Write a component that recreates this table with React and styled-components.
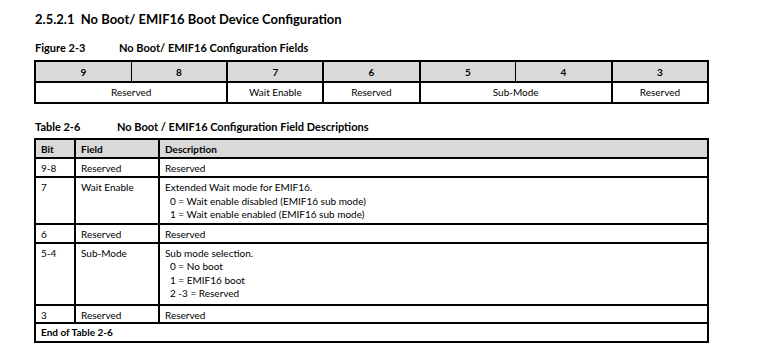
import React from 'react';
import styled, { createGlobalStyle } from 'styled-components';

const GlobalStyle = createGlobalStyle`
  body {
    margin: 0;
    background: #fff;
    font-family: Lato, "Liberation Sans", sans-serif;
    color: #000;
  }
`;

const Page = styled.div`
  width: 771px;
  height: 357px;
  padding: 11px 0 0 34px;
  box-sizing: border-box;
  display: flex;
  flex-direction: column;
`;

const SectionTitle = styled.h2`
  margin: 0 0 0 1px;
  font-size: 13px;
  font-weight: 700;
  line-height: 16px;
`;

const Caption = styled.div`
  display: flex;
  margin: ${(p) => p.$top}px 0 ${(p) => p.$bottom}px 1px;
  font-size: 11px;
  font-weight: 700;
  line-height: 14px;
`;

const CaptionLabel = styled.span`
  width: ${(p) => p.$width}px;
  flex-shrink: 0;
`;

const Table = styled.table`
  border-collapse: collapse;
  table-layout: fixed;
  width: 675px;
  font-size: 10px;
`;

const HeadCell = styled.th`
  background: #d9d9d9;
  border: 2px solid #000;
  ${(p) => p.$thinLeft && 'border-left-width: 1px;'}
  ${(p) => p.$thinRight && 'border-right-width: 1px;'}
  font-weight: 700;
  text-align: ${(p) => p.$align || 'center'};
  padding: 0 5px;
  height: ${(p) => p.$h}px;
  box-sizing: border-box;
`;

const Cell = styled.td`
  border: 2px solid #000;
  text-align: ${(p) => p.$align || 'center'};
  vertical-align: ${(p) => p.$valign || 'middle'};
  padding: ${(p) => p.$pad || '0 5px'};
  height: ${(p) => p.$h}px;
  box-sizing: border-box;
  line-height: 13.5px;
  font-weight: ${(p) => (p.$bold ? 700 : 400)};
`;

const Line = styled.div`
  padding-left: ${(p) => (p.$indent ? 5 : 0)}px;
`;

const bits = ['9', '8', '7', '6', '5', '4', '3'];

const fields = [
  { bit: '9-8', field: 'Reserved', desc: ['Reserved'], h: 19 },
  {
    bit: '7',
    field: 'Wait Enable',
    desc: [
      'Extended Wait mode for EMIF16.',
      '0 = Wait enable disabled (EMIF16 sub mode)',
      '1 = Wait enable enabled (EMIF16 sub mode)',
    ],
    h: 47,
  },
  { bit: '6', field: 'Reserved', desc: ['Reserved'], h: 18 },
  {
    bit: '5-4',
    field: 'Sub-Mode',
    desc: ['Sub mode selection.', '0 = No boot', '1 = EMIF16 boot', '2 -3 = Reserved'],
    h: 62,
  },
  { bit: '3', field: 'Reserved', desc: ['Reserved'], h: 18 },
];

const App = () => {
  return (
    <>
      <GlobalStyle />
      <Page>
        <SectionTitle>2.5.2.1&nbsp; No Boot/ EMIF16 Boot Device Configuration</SectionTitle>

        <Caption $top={14} $bottom={5}>
          <CaptionLabel $width={84}>Figure 2-3</CaptionLabel>
          <span>No Boot/ EMIF16 Configuration Fields</span>
        </Caption>
        <Table>
          <thead>
            <tr>
              {bits.map((b) => (
                <HeadCell
                  key={b}
                  $h={21}
                  $thinRight={b === '9' || b === '5'}
                  $thinLeft={b === '8' || b === '4'}
                >
                  {b}
                </HeadCell>
              ))}
            </tr>
          </thead>
          <tbody>
            <tr>
              <Cell colSpan={2} $h={21}>Reserved</Cell>
              <Cell $h={21}>Wait Enable</Cell>
              <Cell $h={21}>Reserved</Cell>
              <Cell colSpan={2} $h={21}>Sub-Mode</Cell>
              <Cell $h={21}>Reserved</Cell>
            </tr>
          </tbody>
        </Table>

        <Caption $top={16} $bottom={4}>
          <CaptionLabel $width={82}>Table 2-6</CaptionLabel>
          <span>No Boot / EMIF16 Configuration Field Descriptions</span>
        </Caption>
        <Table>
          <colgroup>
            <col style={{ width: 40 }} />
            <col style={{ width: 84 }} />
            <col />
          </colgroup>
          <thead>
            <tr>
              <HeadCell $align="left" $h={19}>Bit</HeadCell>
              <HeadCell $align="left" $h={19}>Field</HeadCell>
              <HeadCell $align="left" $h={19}>Description</HeadCell>
            </tr>
          </thead>
          <tbody>
            {fields.map((f) => (
              <tr key={f.bit}>
                <Cell $align="left" $valign="top" $pad="3px 5px 0" $h={f.h}>{f.bit}</Cell>
                <Cell $align="left" $valign="top" $pad="3px 5px 0" $h={f.h}>{f.field}</Cell>
                <Cell $align="left" $valign="top" $pad="3px 5px 0" $h={f.h}>
                  {f.desc.map((d, i) => (
                    <Line key={d} $indent={i > 0}>{d}</Line>
                  ))}
                </Cell>
              </tr>
            ))}
            <tr>
              <Cell colSpan={3} $align="left" $bold $h={19}>End of Table 2-6</Cell>
            </tr>
          </tbody>
        </Table>
      </Page>
    </>
  );
};

export default App;
